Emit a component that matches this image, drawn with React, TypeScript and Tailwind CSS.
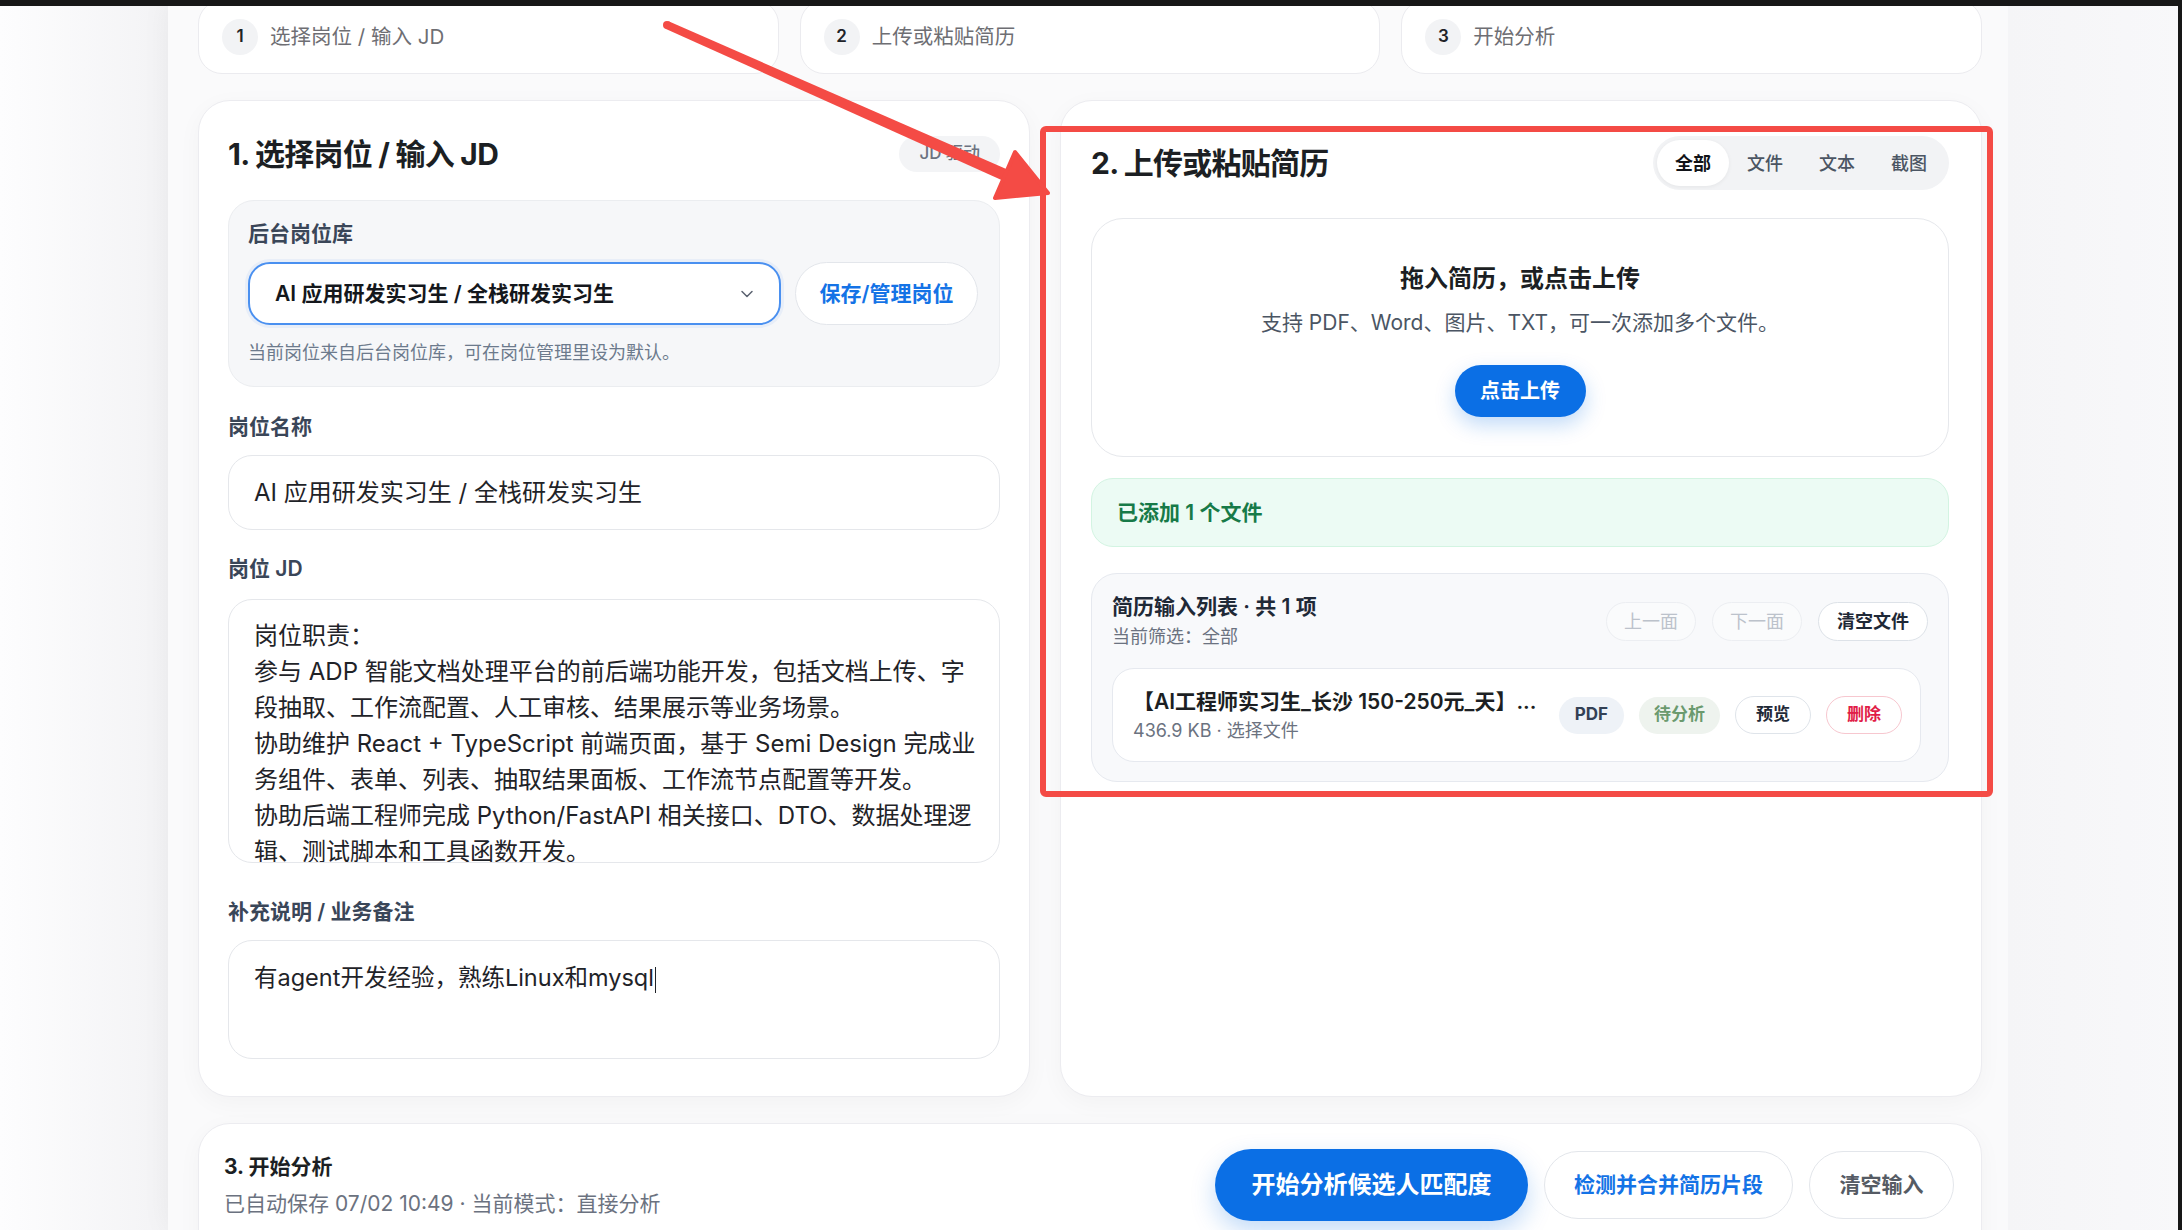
import { ChevronDown } from "lucide-react";

const STEPS = ["选择岗位 / 输入 JD", "上传或粘贴简历", "开始分析"];

const JD_LINES = [
  "岗位职责：",
  "参与 ADP 智能文档处理平台的前后端功能开发，包括文档上传、字",
  "段抽取、工作流配置、人工审核、结果展示等业务场景。",
  "协助维护 React + TypeScript 前端页面，基于 Semi Design 完成业",
  "务组件、表单、列表、抽取结果面板、工作流节点配置等开发。",
  "协助后端工程师完成 Python/FastAPI 相关接口、DTO、数据处理逻",
  "辑、测试脚本和工具函数开发。",
];

const TABS = ["全部", "文件", "文本", "截图"];

function FieldLabel({ children, className = "" }: { children: React.ReactNode; className?: string }) {
  return (
    <div className={`text-[21px] font-semibold leading-[28px] text-[#3a4658] ${className}`}>{children}</div>
  );
}

function JobPanel() {
  return (
    <section className="h-[997px] rounded-[32px] border border-[#ececf0] bg-white px-[29px] pt-[35px] shadow-[0_6px_24px_rgba(15,23,42,0.035)]">
      <div className="flex h-[36px] items-center justify-between">
        <h2 className="text-[30px] font-bold leading-[36px] tracking-tight text-[#1c1f23]">
          1. 选择岗位 / 输入 JD
        </h2>
        <span className="flex h-[36px] items-center rounded-full bg-[#f3f4f6] px-5 text-[17px] font-medium text-[#6b7280]">
          JD 驱动
        </span>
      </div>

      <div className="mt-[28px] rounded-[26px] border border-[#ebedf0] bg-[#f6f7f9] pb-[20px] pl-[19px] pr-[21px] pt-[19px]">
        <FieldLabel>后台岗位库</FieldLabel>
        <div className="mt-[14px] flex gap-[14px]">
          <div className="flex h-[63px] flex-1 items-center justify-between rounded-[22px] border-2 border-[#4a90f0] bg-white pl-[25px] pr-[22px] shadow-[0_0_0_3px_rgba(74,144,240,0.08)]">
            <span className="text-[21px] font-semibold text-[#14171c]">AI 应用研发实习生 / 全栈研发实习生</span>
            <ChevronDown size={20} strokeWidth={1.8} className="text-[#5b6270]" />
          </div>
          <button className="h-[63px] w-[183px] rounded-full border border-[#e3e6eb] bg-white text-[21px] font-semibold text-[#1473e6]">
            保存/管理岗位
          </button>
        </div>
        <p className="mt-[15px] text-[18px] leading-[26px] text-[#6c7a8c]">
          当前岗位来自后台岗位库，可在岗位管理里设为默认。
        </p>
      </div>

      <FieldLabel className="mt-[26px]">岗位名称</FieldLabel>
      <div className="mt-[14px] flex h-[75px] items-center rounded-[24px] border border-[#e5e7eb] bg-white px-[25px] text-[24px] text-[#1f2328]">
        AI 应用研发实习生 / 全栈研发实习生
      </div>

      <FieldLabel className="mt-[25px]">岗位 JD</FieldLabel>
      <div className="mt-[16px] h-[264px] overflow-hidden rounded-[24px] border border-[#e5e7eb] bg-white px-[25px] pt-[18px] text-[24px] leading-[36px] text-[#1f2328]">
        {JD_LINES.map((line) => (
          <div key={line} className="whitespace-nowrap">
            {line}
          </div>
        ))}
      </div>

      <FieldLabel className="mt-[35px]">补充说明 / 业务备注</FieldLabel>
      <div className="mt-[14px] h-[119px] rounded-[24px] border border-[#e5e7eb] bg-white px-[25px] pt-[19px] text-[23.5px] leading-[36px] text-[#1f2328]">
        有agent开发经验，熟练Linux和mysql
        <span className="ml-[1px] inline-block h-[26px] w-px bg-[#1f2328] align-middle" />
      </div>
    </section>
  );
}

function ResumePanel() {
  return (
    <section className="h-[997px] rounded-[32px] border border-[#ececf0] bg-white pl-[30px] pr-[32px] pt-[35px] shadow-[0_6px_24px_rgba(15,23,42,0.035)]">
      <div className="flex h-[54px] items-center justify-between">
        <h2 className="text-[30px] font-bold leading-[36px] tracking-tight text-[#1c1f23]">2. 上传或粘贴简历</h2>
        <div className="flex h-[54px] items-center rounded-full bg-[#f2f3f5] p-1">
          {TABS.map((tab, i) => (
            <span
              key={tab}
              className={
                i === 0
                  ? "flex h-[46px] w-[72px] items-center justify-center rounded-full bg-white text-[18px] font-semibold text-[#111318] shadow-[0_1px_4px_rgba(0,0,0,0.06)]"
                  : "flex h-[46px] w-[72px] items-center justify-center rounded-full text-[18px] font-medium text-[#4b5563]"
              }
            >
              {tab}
            </span>
          ))}
        </div>
      </div>

      <div className="mt-[28px] flex h-[239px] flex-col items-center rounded-[32px] border border-[#e6e8ec] bg-white pt-[44px]">
        <div className="text-[24px] font-bold leading-[32px] text-[#1c1f23]">拖入简历，或点击上传</div>
        <div className="mt-[14px] text-[21px] leading-[28px] text-[#4b5563]">
          支持 PDF、Word、图片、TXT，可一次添加多个文件。
        </div>
        <button className="mt-[28px] h-[52px] w-[131px] rounded-full bg-[#0b6fe5] text-[20px] font-bold text-white shadow-[0_8px_20px_rgba(11,111,229,0.25)]">
          点击上传
        </button>
      </div>

      <div className="mt-[21px] flex h-[69px] items-center rounded-[22px] border border-[#d3f4e2] bg-[#ecfbf4] pl-[25px] text-[21px] font-semibold text-[#177a48]">
        已添加 1 个文件
      </div>

      <div className="mt-[26px] h-[209px] rounded-[26px] border border-[#e6e9ef] bg-[#f8f9fb] px-[20px] pt-[19px]">
        <div className="flex items-start justify-between">
          <div>
            <div className="text-[21px] font-semibold leading-[28px] text-[#1f2937]">简历输入列表 · 共 1 项</div>
            <div className="mt-[4px] text-[18px] leading-[24px] text-[#6b7280]">当前筛选：全部</div>
          </div>
          <div className="mt-[9px] flex gap-4">
            <button className="h-[39px] rounded-full border border-[#eceef2] bg-[#fafbfc] px-[17px] text-[18px] text-[#bcc2cb]">
              上一面
            </button>
            <button className="h-[39px] rounded-full border border-[#eceef2] bg-[#fafbfc] px-[17px] text-[18px] text-[#bcc2cb]">
              下一面
            </button>
            <button className="h-[39px] rounded-full border border-[#dde2e8] bg-white px-[18px] text-[18px] font-semibold text-[#1f2937]">
              清空文件
            </button>
          </div>
        </div>

        <div className="mr-[7px] mt-[19px] flex h-[94px] items-center justify-between rounded-[22px] border border-[#e6e9ef] bg-white pl-[20px] pr-[18px]">
          <div>
            <div className="whitespace-nowrap text-[21px] font-semibold leading-[28px] text-[#1c1f23]">
              【AI工程师实习生_长沙 150-250元_天】...
            </div>
            <div className="mt-[3px] text-[18px] leading-[24px] text-[#6b7280]">436.9 KB · 选择文件</div>
          </div>
          <div className="flex items-center gap-[15px]">
            <span className="flex h-[37px] items-center rounded-full bg-[#eef2f7] px-[16px] text-[17px] font-bold text-[#334155]">
              PDF
            </span>
            <span className="flex h-[37px] items-center rounded-full bg-[#eef3ee] px-[15px] text-[17px] font-semibold text-[#6b9a6e]">
              待分析
            </span>
            <button className="h-[38px] rounded-full border border-[#dfe4ea] bg-white px-5 text-[17px] font-semibold text-[#1f2937]">
              预览
            </button>
            <button className="h-[38px] rounded-full border border-[#f7c7cf] bg-white px-5 text-[17px] font-semibold text-[#e11d48]">
              删除
            </button>
          </div>
        </div>
      </div>
    </section>
  );
}

function ActionBar() {
  return (
    <section className="mt-[26px] flex h-[150px] justify-between rounded-[32px] border border-[#ececf0] bg-white pl-[25px] pr-[27px] shadow-[0_6px_24px_rgba(15,23,42,0.035)]">
      <div className="pt-[29px]">
        <div className="text-[21px] font-bold leading-[28px] text-[#1c1f23]">3. 开始分析</div>
        <div className="mt-[9px] text-[21px] leading-[28px] text-[#6b7280]">
          已自动保存 07/02 10:49 · 当前模式：直接分析
        </div>
      </div>
      <div className="flex h-[97px] items-center gap-4 pt-[25px]">
        <button className="h-[72px] w-[313px] rounded-full bg-[#0b6fe5] text-[24px] font-bold text-white shadow-[0_10px_24px_rgba(11,111,229,0.25)]">
          开始分析候选人匹配度
        </button>
        <button className="h-[68px] w-[249px] rounded-full border border-[#e3e6eb] bg-white text-[21px] font-semibold text-[#1473e6]">
          检测并合并简历片段
        </button>
        <button className="h-[68px] w-[145px] rounded-full border border-[#e3e6eb] bg-white text-[21px] font-semibold text-[#555b64]">
          清空输入
        </button>
      </div>
    </section>
  );
}

export default function App() {
  return (
    <div className="relative flex h-[1230px] w-[2182px] overflow-hidden bg-[#f6f6f8] [font-family:Inter,'Noto_Sans_CJK_SC',sans-serif]">
      <div className="w-[168px] shrink-0 bg-linear-to-r from-[#fdfdfe] to-[#f3f3f5]" />
      <main className="w-[1840px] shrink-0 bg-[#fafafb] pl-[30px] pr-[26px] shadow-[0_0_28px_rgba(0,0,0,0.05)]">
        <div className="grid grid-cols-3 gap-[21px]">
          {STEPS.map((step, i) => (
            <div
              key={step}
              className="flex h-[74px] items-center gap-3 rounded-[24px] border border-[#ebebef] bg-white px-[23px]"
            >
              <span className="flex h-9 w-9 items-center justify-center rounded-full bg-[#f2f3f5] text-[17px] font-semibold text-[#1f2328]">
                {i + 1}
              </span>
              <span className="text-[20.5px] text-[#6e6e73]">{step}</span>
            </div>
          ))}
        </div>

        <div className="mt-[26px] grid grid-cols-[832px_922px] gap-[30px]">
          <JobPanel />
          <ResumePanel />
        </div>

        <ActionBar />
      </main>
      <div className="flex-1 bg-linear-to-r from-[#f5f5f7] to-[#f8f8fa]" />

      {/* screenshot frame */}
      <div className="absolute left-0 top-0 h-[6px] w-full bg-[#171717]" />
      <div className="absolute right-0 top-0 h-full w-[4px] bg-[#171717]" />

      {/* annotation */}
      <div className="pointer-events-none absolute left-[1040px] top-[126px] h-[671px] w-[953px] rounded-[6px] border-[6px] border-[#f44b45]" />
      <svg className="pointer-events-none absolute left-0 top-0" width="2182" height="1230" viewBox="0 0 2182 1230">
        <polygon points="665.4,28.7 668.6,21.3 1007.4,169.5 1002.6,180.5" fill="#f44b45" />
        <circle cx="667" cy="25" r="4" fill="#f44b45" />
        <polygon
          points="1048,193 1015,152 995,198"
          fill="#f44b45"
          stroke="#f44b45"
          strokeWidth="4"
          strokeLinejoin="round"
        />
      </svg>
    </div>
  );
}
